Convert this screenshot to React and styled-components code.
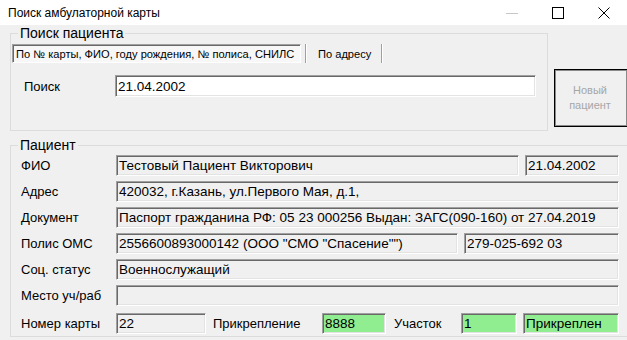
import React from "react";
import styled, { createGlobalStyle } from "styled-components";

const Global = createGlobalStyle`
  html, body { margin: 0; padding: 0; background: #f0f0f0; }
  body { font-family: "Liberation Sans", Arial, sans-serif; color: #000; }
  * { box-sizing: border-box; }
`;

const Window = styled.div`
  width: 627px;
  height: 340px;
  overflow: hidden;
  background: #f0f0f0;
  display: flex;
  flex-direction: column;
`;

const TitleBar = styled.div`
  height: 25px;
  flex: none;
  background: #fff;
  display: flex;
  align-items: center;
  padding-left: 8px;
`;

const Title = styled.span`
  font-size: 12px;
  color: #000;
`;

const Controls = styled.div`
  margin-left: auto;
  display: flex;
  align-items: center;
  height: 100%;
`;

const CtrlBtn = styled.div`
  width: 46px;
  height: 100%;
  display: flex;
  align-items: center;
  justify-content: center;
`;

const Body = styled.div`
  flex: 1;
  padding: 1px 0 0 10px;
  display: flex;
  flex-direction: column;
`;

const TopRow = styled.div`
  display: flex;
  align-items: flex-start;
`;

const Group = styled.fieldset`
  margin: ${(p) => p.$mt || 0}px 0 0 0;
  padding: 0;
  min-width: 0;
  border: 1px solid #dcdcdc;
  width: ${(p) => p.$w}px;
  flex: none;
`;

const Legend = styled.legend`
  margin-left: 7px;
  padding: 0 2px;
  font-size: 14px;
  line-height: 14px;
  height: 14px;
`;

const SearchInner = styled.div`
  padding: 4px 0 33px 1px;
  display: flex;
  flex-direction: column;
  gap: 12px;
`;

const TabStrip = styled.div`
  display: flex;
  align-items: stretch;
  height: 19px;
`;

const Tab = styled.div`
  font-size: 11.1px;
  display: flex;
  align-items: center;
  white-space: nowrap;
  overflow: hidden;
  ${(p) =>
    p.$active
      ? `
    width: 289px;
    padding-left: 3px;
    background: #f7f7f7;
    border: 1px solid;
    border-color: #a0a0a0 #fff #fff #a0a0a0;
    box-shadow: inset 1px 1px 0 #696969;
  `
      : `
    padding: 0 10px 0 11px;
  `}
`;

const TabSep = styled.div`
  width: 2px;
  margin-left: ${(p) => p.$ml || 0}px;
  border-left: 1px solid #a0a0a0;
  border-right: 1px solid #fff;
`;

const SearchRow = styled.div`
  display: flex;
  align-items: center;
  height: 22px;
`;

const SearchLabel = styled.span`
  font-size: 13px;
  width: 103px;
  padding-left: 12px;
  flex: none;
`;

const Field = styled.div`
  height: ${(p) => p.$h || 21}px;
  width: ${(p) => p.$w}px;
  flex: none;
  background: ${(p) => p.$bg || "#f0f0f0"};
  border: 1px solid;
  border-color: #a0a0a0 #fff #fff #a0a0a0;
  box-shadow: inset 1px 1px 0 #696969, inset -1px -1px 0 #e3e3e3;
  font-size: 13.5px;
  padding-left: 2px;
  margin-left: ${(p) => p.$ml || 0}px;
  display: flex;
  align-items: center;
  white-space: nowrap;
  overflow: hidden;
`;

const NewButton = styled.div`
  margin: 43px 0 0 6px;
  width: 74px;
  height: 58px;
  flex: none;
  border: 1px solid #000;
  box-shadow: inset 0 0 0 1px #8a8a8a;
  background: #f0f0f0;
  color: #a6a6a6;
  font-size: 11px;
  line-height: 15px;
  display: flex;
  align-items: center;
  justify-content: center;
  text-align: center;
  padding-right: 2px;
`;

const PatientInner = styled.div`
  padding: 3px 0 2px 1px;
  display: flex;
  flex-direction: column;
  gap: 5px;
`;

const Row = styled.div`
  display: flex;
  align-items: center;
  margin-top: ${(p) => p.$mt || 0}px;
`;

const Label = styled.span`
  font-size: 13px;
  white-space: nowrap;
  flex: none;
  width: ${(p) => p.$w || 104}px;
  padding-left: ${(p) => (p.$pl === undefined ? 9 : p.$pl)}px;
`;

export default function App() {
  return (
    <Window>
      <Global />
      <TitleBar>
        <Title>Поиск амбулаторной карты</Title>
        <Controls>
          <CtrlBtn>
            <svg width="12" height="12" viewBox="0 0 12 12">
              <line x1="0" y1="6.5" x2="12" y2="6.5" stroke="#c8c8c8" strokeWidth="1" />
            </svg>
          </CtrlBtn>
          <CtrlBtn>
            <svg width="12" height="12" viewBox="0 0 12 12">
              <rect x="0.5" y="0.5" width="11" height="11" fill="none" stroke="#000" strokeWidth="1" />
            </svg>
          </CtrlBtn>
          <CtrlBtn>
            <svg width="12" height="12" viewBox="0 0 12 12">
              <path d="M0.5 0.5 L11.5 11.5 M11.5 0.5 L0.5 11.5" stroke="#000" strokeWidth="1" />
            </svg>
          </CtrlBtn>
        </Controls>
      </TitleBar>
      <Body>
        <TopRow>
          <Group $w={538}>
            <Legend>Поиск пациента</Legend>
            <SearchInner>
              <TabStrip>
                <Tab $active>По № карты, ФИО, году рождения, № полиса, СНИЛС</Tab>
                <TabSep $ml={4} />
                <Tab>По адресу</Tab>
                <TabSep />
              </TabStrip>
              <SearchRow>
                <SearchLabel>Поиск</SearchLabel>
                <Field $w={421} $h={22} $bg="#fff">21.04.2002</Field>
              </SearchRow>
            </SearchInner>
          </Group>
          <NewButton>
            Новый
            <br />
            пациент
          </NewButton>
        </TopRow>
        <Group $w={620} $mt={7}>
          <Legend>Пациент</Legend>
          <PatientInner>
            <Row>
              <Label>ФИО</Label>
              <Field $w={403}>Тестовый Пациент Викторович</Field>
              <Field $w={94} $ml={6}>21.04.2002</Field>
            </Row>
            <Row>
              <Label>Адрес</Label>
              <Field $w={503}>420032, г.Казань, ул.Первого Мая, д.1,</Field>
            </Row>
            <Row>
              <Label>Документ</Label>
              <Field $w={503}>Паспорт гражданина РФ: 05 23 000256 Выдан: ЗАГС(090-160) от 27.04.2019</Field>
            </Row>
            <Row>
              <Label>Полис ОМС</Label>
              <Field $w={342}>2556600893000142 (ООО "СМО "Спасение"")</Field>
              <Field $w={155} $ml={6}>279-025-692 03</Field>
            </Row>
            <Row>
              <Label>Соц. статус</Label>
              <Field $w={503}>Военнослужащий</Field>
            </Row>
            <Row>
              <Label>Место уч/раб</Label>
              <Field $w={503}></Field>
            </Row>
            <Row $mt={2}>
              <Label>Номер карты</Label>
              <Field $w={90}>22</Field>
              <Label $w={116} $pl={7}>Прикрепление</Label>
              <Field $w={64} $bg="#90ee90">8888</Field>
              <Label $w={75} $pl={8}>Участок</Label>
              <Field $w={56} $bg="#90ee90">1</Field>
              <Field $w={96} $ml={6} $bg="#90ee90">Прикреплен</Field>
            </Row>
          </PatientInner>
        </Group>
      </Body>
    </Window>
  );
}
